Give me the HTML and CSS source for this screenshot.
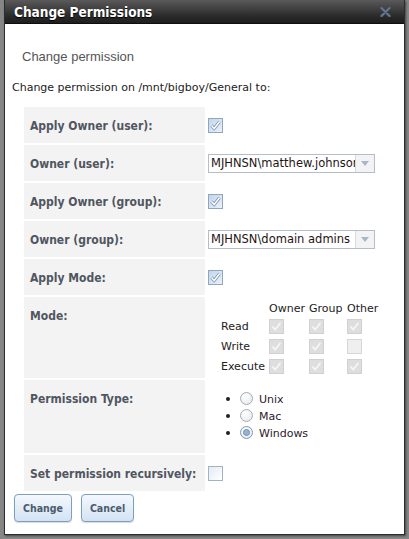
FILE: index.html
```html
<!DOCTYPE html>
<html>
<head>
<meta charset="utf-8">
<link rel="stylesheet" href="styles.css">
</head>
<body>
<div class="dialog">
  <div class="titlebar">
    <span class="title">Change Permissions</span>
    <svg class="close" width="11" height="10" viewBox="0 0 11 10"><path d="M1.5 1 L9.5 9 M9.5 1 L1.5 9" stroke="#4a5b70" stroke-width="2.8" stroke-linecap="round"/><path d="M1.5 1 L9.5 9 M9.5 1 L1.5 9" stroke="#6a7d93" stroke-width="1.2" stroke-linecap="round"/></svg>
  </div>
  <div class="content">
    <p class="subtitle">Change permission</p>
    <p class="intro">Change permission on /mnt/bigboy/General to:</p>
    <table class="form">
      <tr>
        <td class="label">Apply Owner (user):</td>
        <td class="value"><span class="cb on"><svg width="15" height="15" viewBox="0 0 15 15"><path d="M3.5 7.5 L6.2 10.5 L11.5 3.8" fill="none" stroke="#6a8db5" stroke-width="3"/><path d="M3.5 7.5 L6.2 10.5 L11.5 3.8" fill="none" stroke="#fff" stroke-width="1.6"/></svg></span></td>
      </tr>
      <tr>
        <td class="label">Owner (user):</td>
        <td class="value"><div class="select"><span class="sel-text">MJHNSN\matthew.johnson</span><span class="sel-arrow"><svg width="8" height="5" viewBox="0 0 8 5"><path d="M0 0 H8 L4 5 Z" fill="#a7b6c8"/></svg></span></div></td>
      </tr>
      <tr>
        <td class="label">Apply Owner (group):</td>
        <td class="value"><span class="cb on"><svg width="15" height="15" viewBox="0 0 15 15"><path d="M3.5 7.5 L6.2 10.5 L11.5 3.8" fill="none" stroke="#6a8db5" stroke-width="3"/><path d="M3.5 7.5 L6.2 10.5 L11.5 3.8" fill="none" stroke="#fff" stroke-width="1.6"/></svg></span></td>
      </tr>
      <tr>
        <td class="label">Owner (group):</td>
        <td class="value"><div class="select"><span class="sel-text">MJHNSN\domain admins</span><span class="sel-arrow"><svg width="8" height="5" viewBox="0 0 8 5"><path d="M0 0 H8 L4 5 Z" fill="#a7b6c8"/></svg></span></div></td>
      </tr>
      <tr>
        <td class="label">Apply Mode:</td>
        <td class="value"><span class="cb on"><svg width="15" height="15" viewBox="0 0 15 15"><path d="M3.5 7.5 L6.2 10.5 L11.5 3.8" fill="none" stroke="#6a8db5" stroke-width="3"/><path d="M3.5 7.5 L6.2 10.5 L11.5 3.8" fill="none" stroke="#fff" stroke-width="1.6"/></svg></span></td>
      </tr>
      <tr>
        <td class="label">Mode:</td>
        <td class="value top">
          <table class="mode">
            <tr class="mhead"><td></td><td>Owner</td><td>Group</td><td>Other</td></tr>
            <tr><td>Read</td>
              <td><span class="cb dis on"><svg width="15" height="15" viewBox="0 0 15 15"><path d="M3.5 7.5 L6.2 10.5 L11.5 3.8" fill="none" stroke="#f5f5f5" stroke-width="1.8"/></svg></span></td>
              <td><span class="cb dis on"><svg width="15" height="15" viewBox="0 0 15 15"><path d="M3.5 7.5 L6.2 10.5 L11.5 3.8" fill="none" stroke="#f5f5f5" stroke-width="1.8"/></svg></span></td>
              <td><span class="cb dis on"><svg width="15" height="15" viewBox="0 0 15 15"><path d="M3.5 7.5 L6.2 10.5 L11.5 3.8" fill="none" stroke="#f5f5f5" stroke-width="1.8"/></svg></span></td></tr>
            <tr><td>Write</td>
              <td><span class="cb dis on"><svg width="15" height="15" viewBox="0 0 15 15"><path d="M3.5 7.5 L6.2 10.5 L11.5 3.8" fill="none" stroke="#f5f5f5" stroke-width="1.8"/></svg></span></td>
              <td><span class="cb dis on"><svg width="15" height="15" viewBox="0 0 15 15"><path d="M3.5 7.5 L6.2 10.5 L11.5 3.8" fill="none" stroke="#f5f5f5" stroke-width="1.8"/></svg></span></td>
              <td><span class="cb dis off"></span></td></tr>
            <tr><td>Execute</td>
              <td><span class="cb dis on"><svg width="15" height="15" viewBox="0 0 15 15"><path d="M3.5 7.5 L6.2 10.5 L11.5 3.8" fill="none" stroke="#f5f5f5" stroke-width="1.8"/></svg></span></td>
              <td><span class="cb dis on"><svg width="15" height="15" viewBox="0 0 15 15"><path d="M3.5 7.5 L6.2 10.5 L11.5 3.8" fill="none" stroke="#f5f5f5" stroke-width="1.8"/></svg></span></td>
              <td><span class="cb dis on"><svg width="15" height="15" viewBox="0 0 15 15"><path d="M3.5 7.5 L6.2 10.5 L11.5 3.8" fill="none" stroke="#f5f5f5" stroke-width="1.8"/></svg></span></td></tr>
          </table>
        </td>
      </tr>
      <tr>
        <td class="label">Permission Type:</td>
        <td class="value top">
          <ul class="ptype">
            <li><span class="radio"></span><span class="rlabel">Unix</span></li>
            <li><span class="radio"></span><span class="rlabel">Mac</span></li>
            <li><span class="radio on"><span class="dot"></span></span><span class="rlabel">Windows</span></li>
          </ul>
        </td>
      </tr>
      <tr>
        <td class="label">Set permission recursively:</td>
        <td class="value"><span class="cb off"></span></td>
      </tr>
    </table>
    <div class="buttons">
      <button class="btn">Change</button>
      <button class="btn">Cancel</button>
    </div>
  </div>
</div>
</body>
</html>
```

FILE: styles.css
```css
html, body {
  margin: 0;
  padding: 0;
}
body {
  background: #868686;
  width: 409px;
  height: 539px;
  overflow: hidden;
  font-family: "DejaVu Sans", Verdana, sans-serif;
  font-size: 11px;
  color: #222;
}
.dialog {
  margin-left: 4px;
  width: 399px;
  height: 534px;
  background: #fff;
  border: 1px solid #2c2c2c;
  border-top: none;
  box-shadow: 1px 1px 2px rgba(0,0,0,0.5);
}
.titlebar {
  height: 23px;
  background: linear-gradient(#5a5a5a, #2a2a2a 70%, #1e1e1e);
  border-bottom: 1px solid #0e0e0e;
  display: flex;
  align-items: center;
  justify-content: space-between;
  padding: 0 13px 0 9px;
}
.title {
  font-family: "DejaVu Sans Condensed", "DejaVu Sans", sans-serif;
  font-weight: bold;
  font-size: 13.5px;
  color: #fff;
  text-shadow: 0 1px 1px #000;
}
.close {
  display: block;
  margin-top: 1px;
}
.content {
  padding: 0 0 0 7px;
}
.subtitle {
  margin: 25px 0 0 10px;
  font-family: "Liberation Sans", Arial, sans-serif;
  font-size: 13px;
  line-height: 16px;
  color: #555;
}
.intro {
  margin: 16px 0 0 0;
  line-height: 14px;
  color: #222;
}
table.form {
  border-collapse: separate;
  border-spacing: 2px;
  margin: 10px 0 0 10px;
}
td.label {
  width: 169px;
  background: #f3f3f3;
  padding: 12px 6px 10px;
  vertical-align: top;
  font-family: "DejaVu Sans Condensed", "DejaVu Sans", sans-serif;
  font-weight: bold;
  font-size: 12px;
  line-height: 14px;
  color: #50565f;
  white-space: nowrap;
}
td.value {
  width: 190px;
  padding: 0 0 0 1px;
  vertical-align: middle;
}
td.value.top {
  vertical-align: top;
}
.cb {
  display: block;
  width: 13px;
  height: 13px;
  border: 1px solid #93a5bc;
  background: linear-gradient(135deg, #c3d5ea, #eaf1f9);
  position: relative;
}
.cb svg {
  position: absolute;
  left: -1px;
  top: -1px;
}
.cb.off {
  background: linear-gradient(135deg, #e4ebf5, #ffffff);
  border-color: #a3b1c2;
}
.cb.dis {
  border-color: #d0d0d0;
  background: #dedede;
}
.cb.dis.off {
  background: #efefef;
  border-color: #d6d6d6;
}
.select {
  display: flex;
  width: 165px;
  height: 17px;
  border: 1px solid #b3bdcb;
  background: #fff;
}
.sel-text {
  flex: 1;
  overflow: hidden;
  white-space: nowrap;
  font-size: 11.5px;
  line-height: 17px;
  padding-left: 2px;
  color: #1e1414;
}
.sel-arrow {
  width: 18px;
  border-left: 1px solid #d5dae2;
  background: #f3f3f3;
  display: flex;
  align-items: center;
  justify-content: center;
}
table.mode {
  border-collapse: collapse;
  margin: 4px 0 2px 13px;
}
table.mode td {
  padding: 0;
  height: 20px;
  vertical-align: middle;
  white-space: nowrap;
}
table.mode td:nth-child(1) { width: 48px; }
table.mode td:nth-child(2) { width: 40px; }
table.mode td:nth-child(3) { width: 38px; }
table.mode tr.mhead td {
  height: 15px;
  line-height: 15px;
  vertical-align: top;
}
ul.ptype {
  margin: 11px 0 11px 0;
  padding-left: 32px;
  list-style: none;
}
ul.ptype li {
  line-height: 17px;
  height: 17px;
}
ul.ptype li::before {
  content: "";
  display: inline-block;
  width: 4px;
  height: 4px;
  border-radius: 50%;
  background: #222;
  margin-left: -14px;
  margin-right: 10px;
  vertical-align: 2px;
}
.radio {
  display: inline-block;
  vertical-align: -2px;
  width: 11px;
  height: 11px;
  border: 1px solid #a6adb6;
  border-radius: 50%;
  background: radial-gradient(circle at 40% 35%, #ffffff, #e2e5e9);
  position: relative;
}
.radio.on {
  border-color: #8297ad;
}
.radio .dot {
  position: absolute;
  left: 2px;
  top: 2px;
  width: 5px;
  height: 5px;
  border-radius: 50%;
  border: 1px solid #6f92b6;
  background: #93b4d6;
}
.rlabel {
  margin-left: 6px;
  color: #2a1a2a;
}
.buttons {
  display: flex;
  gap: 9px;
  margin: 1px 0 0 2px;
}
.btn {
  height: 28px;
  padding: 0 8px;
  border: 1px solid #7f9dbd;
  border-radius: 4px;
  background: linear-gradient(#f4f8fd, #d3e3f4);
  font-family: "DejaVu Sans Condensed", "DejaVu Sans", sans-serif;
  font-weight: bold;
  font-size: 10.5px;
  color: #4b5b6c;
  box-shadow: 0 1px 1px rgba(0,0,0,0.15);
}
```
